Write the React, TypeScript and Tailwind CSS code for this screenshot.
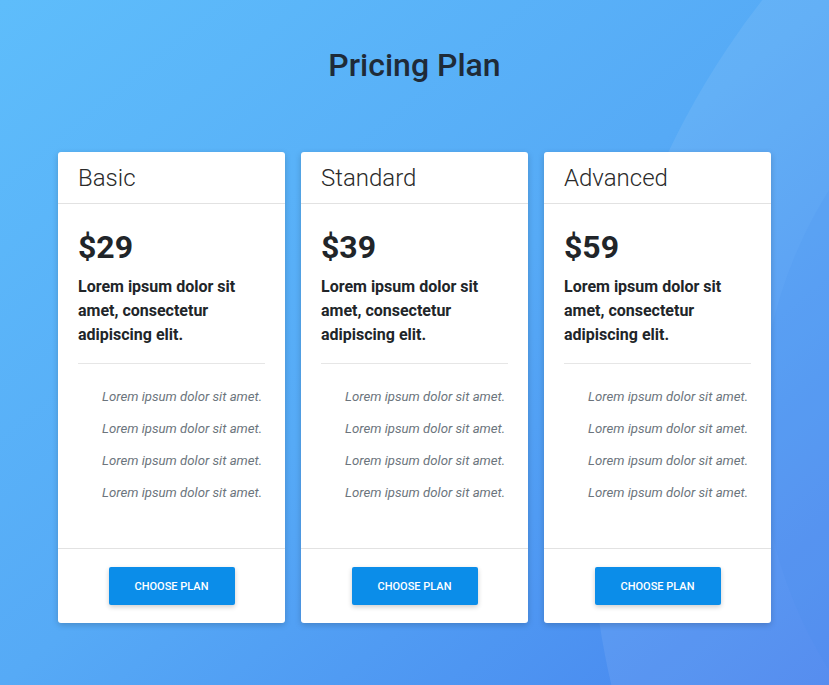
const plans = [
  { name: "Basic", price: "$29" },
  { name: "Standard", price: "$39" },
  { name: "Advanced", price: "$59" },
];

const features = [
  "Lorem ipsum dolor sit amet.",
  "Lorem ipsum dolor sit amet.",
  "Lorem ipsum dolor sit amet.",
  "Lorem ipsum dolor sit amet.",
];

export default function App() {
  return (
    <div
      className="relative min-h-[685px] w-full overflow-hidden bg-gradient-to-br from-[#5ebdfb] via-[#56aaf6] to-[#4884ee] font-['Roboto',sans-serif]"
    >
      {/* decorative circles */}
      <div className="pointer-events-none absolute left-[590px] top-[-312px] h-[1624px] w-[1624px] rounded-full bg-white/[0.08]" />
      <div className="pointer-events-none absolute left-[760px] top-[-22px] h-[904px] w-[904px] rounded-full bg-[#3f8ef0]/[0.12]" />

      <div className="relative flex flex-col items-center">
        <h1 className="mt-[46px] text-[32px] font-medium leading-[38px] text-[#1f2b38]">
          Pricing Plan
        </h1>

        <div className="mt-[68px] flex gap-4">
          {plans.map((p) => (
            <PlanCard key={p.name} name={p.name} price={p.price} />
          ))}
        </div>
      </div>
    </div>
  );
}

function PlanCard({ name, price }: { name: string; price: string }) {
  return (
    <div className="flex h-[471px] w-[227px] flex-col rounded-[3px] bg-white shadow-[0_2px_6px_rgba(0,0,0,0.18)]">
      <div className="flex h-[52px] items-center border-b border-[#e2e2e2] px-5">
        <h2 className="text-[24px] font-light text-[#2a2a2a]">{name}</h2>
      </div>

      <div className="flex-1 px-5 pt-6">
        <div className="text-[32px] font-bold leading-[38px] text-[#212529]">{price}</div>
        <p className="mt-[9px] text-[16px] font-bold leading-6 text-[#212529]">
          Lorem ipsum dolor sit amet, consectetur adipiscing elit.
        </p>
        <div className="mt-4 border-t border-[#e6e6e6]" />
        <ul className="mt-[17px] pl-6">
          {features.map((f, i) => (
            <li key={i} className="text-[13.2px] italic leading-8 text-[#6c757d]">
              {f}
            </li>
          ))}
        </ul>
      </div>

      <div className="flex h-[75px] items-center justify-center border-t border-[#e2e2e2]">
        <button className="h-[38px] w-[126px] rounded-[2px] bg-[#0b8de9] pt-[2px] text-[11px] font-medium uppercase text-white shadow-[0_2px_5px_rgba(0,0,0,0.2)]">
          Choose Plan
        </button>
      </div>
    </div>
  );
}
